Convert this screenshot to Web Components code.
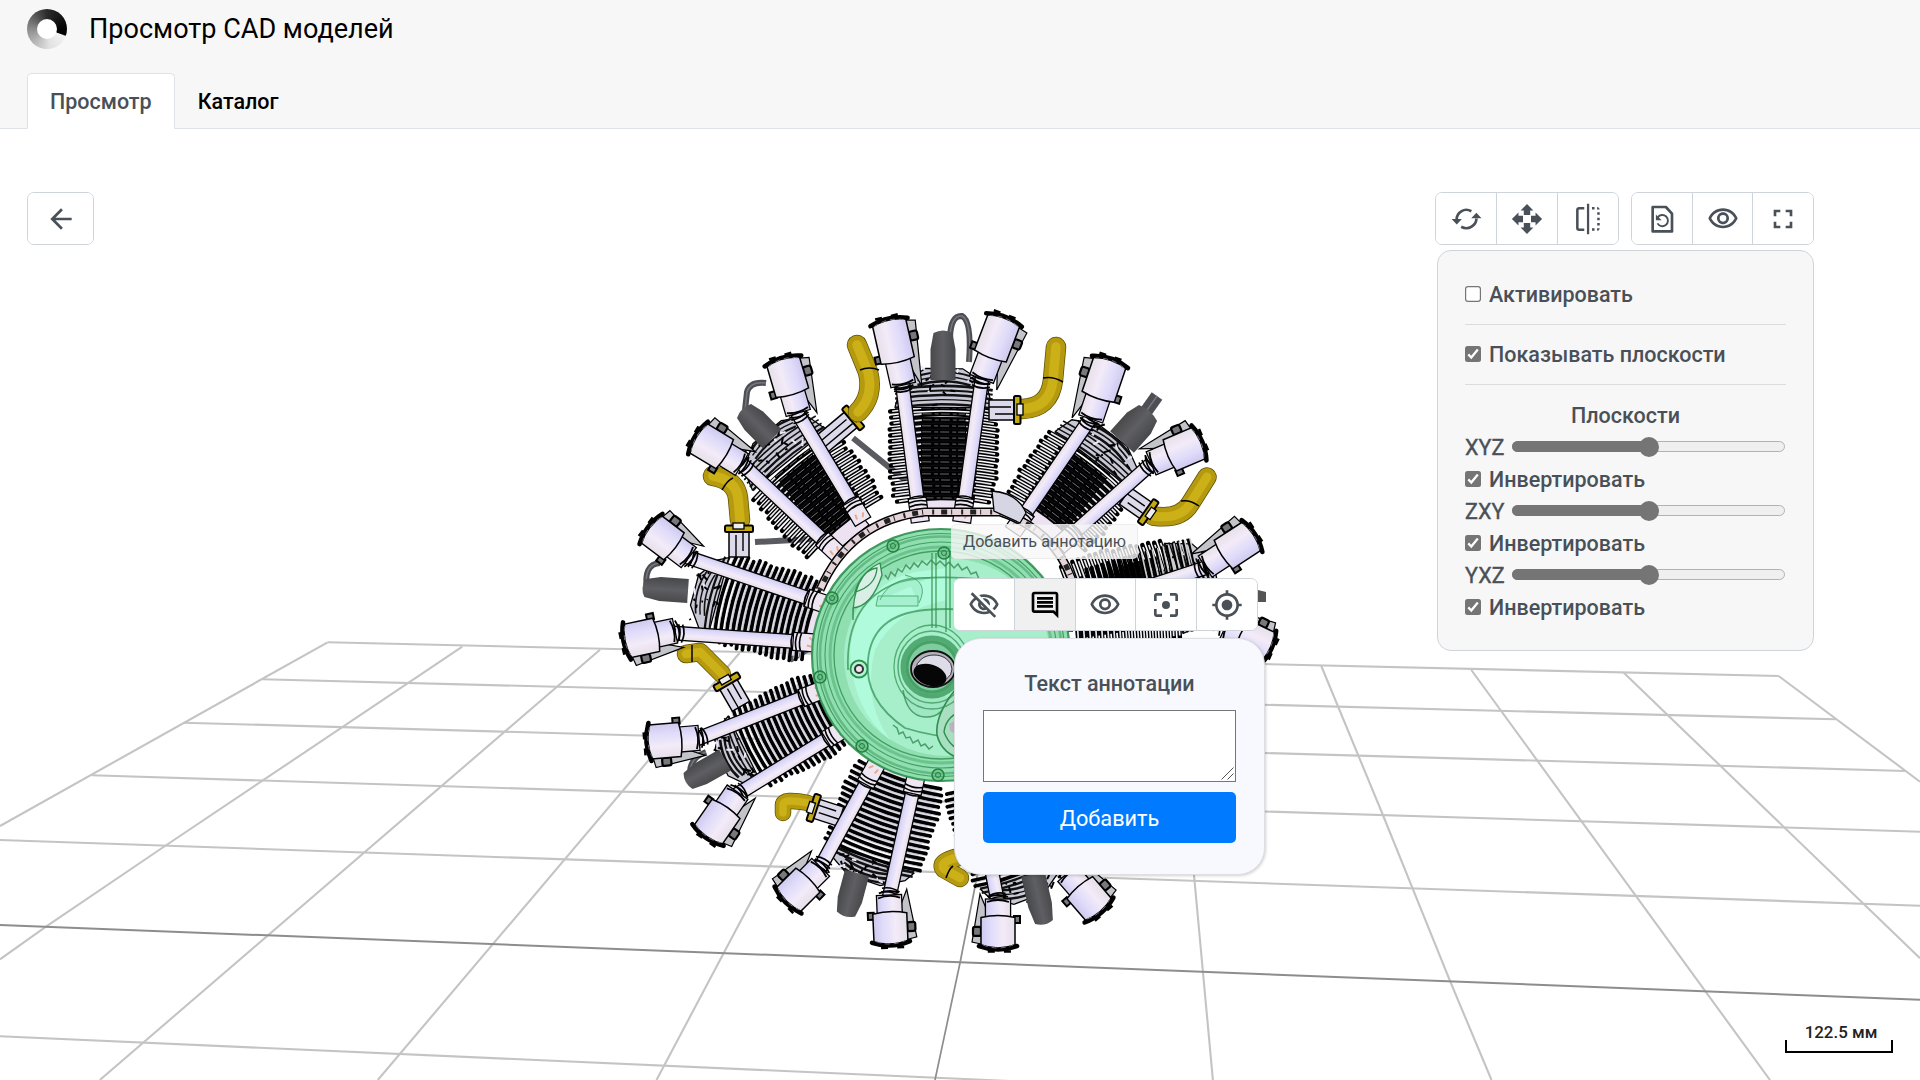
<!DOCTYPE html>
<html lang="ru">
<head>
<meta charset="utf-8">
<title>Просмотр CAD моделей</title>
<style>
  html, body { margin: 0; height: 100%; overflow: hidden; background: #fff; }
  body { font-family: Roboto, "Liberation Sans", sans-serif; font-size: 21.5px; line-height: 32px; color: #495057; }
</style>
</head>
<body>
<cad-app></cad-app>
<script>
const define = (name, html) => customElements.define(name, class extends HTMLElement {
  connectedCallback() {
    if (this.shadowRoot) return;
    const root = this.attachShadow({ mode: 'open' });
    root.innerHTML = typeof html === 'function' ? html(this) : html;
  }
});

/* ---------- icons, on a 24-unit grid ---------- */
const EYE = '<path d="M12 6c3.79 0 7.17 2.13 8.82 5.5C19.17 14.87 15.79 17 12 17s-7.17-2.13-8.82-5.5C4.83 8.13 8.21 6 12 6m0-2C7 4 2.73 7.11 1 11.5 2.73 15.89 7 19 12 19s9.27-3.11 11-7.5C21.27 7.11 17 4 12 4zm0 5a2.5 2.5 0 0 1 0 5 2.5 2.5 0 0 1 0-5m0-2c-2.48 0-4.5 2.02-4.5 4.5S9.52 16 12 16s4.5-2.02 4.5-4.5S14.48 7 12 7z"/>';
const ICONS = {
  back: '<path d="M20 11H7.83l5.59-5.59L12 4l-8 8 8 8 1.41-1.41L7.83 13H20v-2z"/>',
  eye: EYE,
  eyeOff: '<path d="M12 6c3.79 0 7.17 2.13 8.82 5.5-.59 1.22-1.42 2.27-2.41 3.12l1.41 1.41c1.39-1.23 2.49-2.77 3.18-4.53C21.27 7.11 17 4 12 4c-1.27 0-2.49.2-3.64.57l1.65 1.65C10.66 6.09 11.32 6 12 6zm-1.07 1.14L13 9.21c.57.25 1.03.71 1.28 1.28l2.07 2.07c.08-.34.14-.7.14-1.07C16.5 9.01 14.48 7 12 7c-.37 0-.72.05-1.07.14zM2.01 3.87l2.68 2.68C3.06 7.83 1.77 9.53 1 11.5 2.73 15.89 7 19 12 19c1.52 0 2.98-.29 4.32-.82l3.42 3.42 1.41-1.41L3.42 2.45 2.01 3.87zm7.5 7.5l2.61 2.61c-.04.01-.08.02-.12.02-1.38 0-2.5-1.12-2.5-2.5 0-.05.01-.08.01-.13zm-3.4-3.4l1.75 1.75c-.23.55-.36 1.15-.36 1.78 0 2.48 2.02 4.5 4.5 4.5.63 0 1.23-.13 1.77-.36l.98.98c-.88.24-1.8.38-2.75.38-3.79 0-7.17-2.13-8.82-5.5.7-1.43 1.72-2.61 2.93-3.53z"/>',
  full: '<path d="M7 14H5v5h5v-2H7v-3zm-2-4h2V7h3V5H5v5zm12 7h-3v2h5v-5h-2v3zM14 5v2h3v3h2V5h-5z"/>',
  focus: '<path d="M5 15H3v4c0 1.1.9 2 2 2h4v-2H5v-4zM5 5h4V3H5c-1.1 0-2 .9-2 2v4h2V5zm14-2h-4v2h4v4h2V5c0-1.1-.9-2-2-2zm0 16h-4v2h4c1.1 0 2-.9 2-2v-4h-2v4z"/><circle cx="12" cy="12" r="3"/>',
  locate: '<path d="M12 8c-2.21 0-4 1.79-4 4s1.79 4 4 4 4-1.79 4-4-1.79-4-4-4zm8.94 3c-.46-4.17-3.77-7.48-7.94-7.94V1h-2v2.06C6.83 3.52 3.52 6.83 3.06 11H1v2h2.06c.46 4.17 3.77 7.48 7.94 7.94V23h2v-2.06c4.17-.46 7.48-3.77 7.94-7.94H23v-2h-2.06zM12 19c-3.87 0-7-3.13-7-7s3.13-7 7-7 7 3.13 7 7-3.13 7-7 7z"/>',
  comment: '<path d="M20 2H4c-1.1 0-2 .9-2 2v12c0 1.1.9 2 2 2h14l4 4V4c0-1.1-.9-2-2-2zm0 15.17L18.83 16H4V4h16v13.17zM6 12h12v2H6zm0-3h12v2H6zm0-3h12v2H6z"/>',
  rotate: '<path fill="none" stroke="currentColor" stroke-width="2" d="M5 12.2C5 7.4 10.6 3 16 6.2M19.8 11.6C19.8 16.4 14 21 8.400 17.800"/><path d="M1.200 12h7.700l-3.800 4.200zM15.900 11.500h7.700l-3.800-4.200z"/>',
  move: '<path d="M12 .7l4.800 4.900h-2.400V9H9.600V5.600H7.200zM12 23.300l4.800-4.900h-2.400V15H9.600v3.400H7.200zM.7 12l4.900-4.800v2.400H9v4.800H5.600v2.400zM23.300 12l-4.900-4.800v2.400H15v4.800h3.400v2.400z"/>',
  flip: '<path fill="none" stroke="currentColor" stroke-width="1.900" d="M9.200 3.900H5.300a1.300 1.300 0 0 0-1.300 1.300v13.600a1.300 1.300 0 0 0 1.300 1.300h3.900"/><path d="M11.200.5h1.700v23h-1.700zM15 3h1.900v1.900H15zM18.800 3a2 2 0 0 1 2 1.900h-2zM18.900 7h1.900v1.900h-1.900zM18.900 11h1.900v1.900h-1.900zM18.900 15h1.900v1.900h-1.900zM15 19h1.900v1.900H15zM18.800 19h2a2 2 0 0 1-2 1.900z"/>',
  restore: '<path fill="none" stroke="currentColor" stroke-width="2" stroke-linejoin="round" d="M5 3h9.900l4.600 5v13.300H5z"/><path fill="none" stroke="currentColor" stroke-width="1.400" d="M8.800 10.800a4.200 4.200 0 1 1-.2 4.500"/><path d="M7.400 8.600v4.300h4.300z"/>'
};

define('tool-button', el => `
<style>
  :host { display: flex; align-items: center; justify-content: center; box-sizing: border-box; flex: 1 1 0;
    border-left: 1px solid #ced4da; background: #fff; color: #495057; }
  :host(:first-child) { border-left: 0; }
  :host([active]) { background: #f0f0f0; color: #000; }
  svg { display: block; width: 32px; height: 32px; fill: currentColor; margin-top: 1px; }
</style><svg viewBox="0 0 24 24">${ICONS[el.getAttribute('icon')]}</svg>`);

define('tool-group', `
<style>
  :host { display: flex; box-sizing: border-box; height: 53px; border: 1px solid #ced4da; border-radius: 7px; overflow: hidden; background: #fff; flex: none; }
</style><slot></slot>`);

define('check-row', `
<style>
  :host { display: flex; height: 32px; gap: 8px; align-items: flex-start; }
  svg { width: 16px; height: 16px; margin-top: 7px; flex: none; }
  .on { display: none; } :host([checked]) .on { display: block; } :host([checked]) .off { display: none; }
  span { font-weight: 500; }
</style>
<svg class="off" viewBox="0 0 16 16"><rect x=".6" y=".6" width="14.800" height="14.800" rx="2.400" fill="#fff" stroke="#767676" stroke-width="1.200"/></svg>
<svg class="on" viewBox="0 0 16 16"><rect width="16" height="16" rx="2.500" fill="#757575"/><path d="M3.300 8.400l3 3.100 6.500-8" fill="none" stroke="#fff" stroke-width="2.300"/></svg>
<span><slot></slot></span>`);

define('slider-row', `
<style>
  :host { display: flex; height: 32px; }
  b { font-weight: 400; -webkit-text-stroke: .4px; width: 47px; flex: none; letter-spacing: .1px; }
  .track { flex: 1; box-sizing: border-box; height: 11px; margin: 9px 1px 0 0; border: 1px solid #b2b2b2; border-radius: 6px; background: #efefef; display: flex; align-items: center; }
  .fill { width: 50%; height: 11px; margin-left: -1px; border-radius: 6px 0 0 6px; background: #757575; flex: none; }
  .thumb { width: 20px; height: 20px; margin-left: -9px; border-radius: 50%; background: #757575; flex: none; }
</style><b><slot></slot></b><div class="track"><div class="fill"></div><div class="thumb"></div></div>`);

define('planes-panel', `
<style>
  :host { display: block; box-sizing: border-box; width: 377px; height: 401px; padding: 28px 27px 26px; border: 1px solid #ced4da; border-radius: 14px; background: #f7f7f7; }
  hr { border: 0; border-top: 1px solid #dcdcdd; margin: 13px 0 14px; }
  .t { text-align: center; font-weight: 500; margin-top: 15px; height: 32px; }
</style>
<check-row>Активировать</check-row><hr>
<check-row checked>Показывать плоскости</check-row><hr>
<div class="t">Плоскости</div>
<slider-row>XYZ</slider-row><check-row checked>Инвертировать</check-row>
<slider-row>ZXY</slider-row><check-row checked>Инвертировать</check-row>
<slider-row>YXZ</slider-row><check-row checked>Инвертировать</check-row>`);

define('app-header', `
<style>
  :host { display: flex; flex-direction: column; justify-content: space-between; box-sizing: border-box; height: 129px; background: #f7f7f7; border-bottom: 1px solid #dee2e6; padding-left: 27px; flex: none; }
  .brand { display: flex; align-items: center; gap: 22px; height: 58px; }
  .logo { width: 40px; height: 40px; border-radius: 50%; display: grid; place-items: center; background: conic-gradient(#2b2b2b 0deg, #050505 85deg, #000 108deg, #f2f2f2 112deg, #e2e2e2 170deg, #c6c6c6 205deg, #8c8c8c 270deg, #4a4a4a 330deg, #2b2b2b 360deg); }
  .logo i { width: 20px; height: 20px; border-radius: 50%; background: #fff; }
  h1 { margin: 0; font-size: 27.050px; line-height: 40px; font-weight: 400; color: #000; }
  nav { display: flex; height: 56px; margin-bottom: -1px; }
  nav span { box-sizing: border-box; padding: 12px 22px 0; font-weight: 500; color: #000; border: 1px solid transparent; }
  nav .on { background: #fff; color: #495057; border-color: #dee2e6 #dee2e6 #fff; border-radius: 5px 5px 0 0; }
</style>
<div class="brand"><div class="logo"><i></i></div><h1>Просмотр CAD моделей</h1></div>
<nav><span class="on">Просмотр</span><span>Каталог</span></nav>`);

define('annotation-form', `
<style>
  :host { display: flex; flex-direction: column; box-sizing: border-box; width: 311px; height: 237px; padding: 28px 28px 0; border: 1.5px solid #dedfe2; border-radius: 27px; background: #f8f8ff; box-shadow: 1px 1px 3px rgba(0,0,0,.18); }
  .t { text-align: center; font-weight: 500; padding-top: 1px; margin-bottom: 10px; }
  textarea { display: block; box-sizing: border-box; width: 100%; height: 72px; margin: 0; border: 1px solid #767676; border-radius: 0; background: #fff; resize: none; }
  .area { position: relative; margin-bottom: 10px; }
  .area svg { position: absolute; right: 2px; bottom: 2px; width: 13px; height: 13px; }
  button { height: 51px; border: 0; border-radius: 5px; background: #007bff; color: #fff; font: 400 21.700px Roboto, sans-serif; padding: 2px 0 0; }
</style>
<div class="t">Текст аннотации</div>
<div class="area"><textarea></textarea><svg viewBox="0 0 13 13"><path d="M.5 12.500l12-12M6.500 12.500l6-6" stroke="#555" stroke-width="1"/></svg></div>
<button>Добавить</button>`);

define('scale-bar', `
<style>
  :host { display: block; width: 108px; font: 500 16.900px/20px Roboto, sans-serif; color: #222; text-align: center; padding-top: 1px; }
  span { display: block; padding-left: 4px; margin-bottom: -2px; }
  i { display: block; box-sizing: border-box; height: 13px; border: 2px solid #000; border-top: 0; }
</style><span>122.5 мм</span><i></i>`);

/* ---------- 3D scene: floor grid and radial engine ---------- */
function floor() {
  const L = [
    [[327.6,642.3],[1778.6,676]], [[262,679.3],[1835.6,719.3]], [[183.7,722.7],[1906,771]], [[91.8,775.3],[1920,831.7]],
    [[0,840],[1920,905.7]], [[0,1036.3],[1010,1081]],
    [[327.6,642.3],[0,826]], [[462.3,646.700],[165,846],[46,926.700],[0,959.300]], [[600,649.700],[99.8,1080]],
    [[739.700,652.700],[377.8,1080]], [[881,656],[656.5,1080]],
    [[1185,663],[1194,875],[1212.900,1080]], [[1321.300,666],[1382.500,814],[1449.900,980.700],[1491.500,1080]],
    [[1471.300,670],[1770,1080]], [[1623.800,672.700],[1920,958.300]], [[1778.600,676],[1920,781.700]]];
  const P = l => l.map(p => p.join(' ')).join('L');
  return L.map(l => `<path d="M${P(l)}" fill="none" stroke="#c4c4c4" stroke-width="2.100"/>`).join('')
    + `<path d="M0 925L960 962.300L1920 999.700" fill="none" stroke="#8d8d8d" stroke-width="2"/><path d="M1020 658L960 963L935 1080" fill="none" stroke="#8d8d8d" stroke-width="1.700"/>`;
}
/* deterministic jitter, so that the mechanical detail looks irregular */
let seed = 7; const rnd = () => (seed = (seed * 16807) % 2147483647) / 2147483647;
const frame = (a, b) => { const dx = b[0]-a[0], dy = b[1]-a[1]; return { len: Math.hypot(dx,dy), ang: Math.atan2(dy,dx)*180/Math.PI }; };
const place = (a, b, f) => { const k = frame(a,b); return `<g transform="translate(${a[0]} ${a[1]}) rotate(${k.ang.toFixed(2)})">${f(k.len)}</g>`; };

/* lit barrels show pale gaps across the whole width, the others keep a dark core */
const barrel = (base, top, hw, lit) => place(base, top, n => {
  let s = `<path d="M-14 ${-hw*.4}H8V${hw*.4}H-14Z" fill="#ece2f2" stroke="#000" stroke-width="1.200"/>`;
  s += lit ? `<path d="M4 ${-hw*.85}L${n*.74} ${-hw*.9}V${hw*.9}L4 ${hw*.85}Z" fill="#dddce6"/>`
           : `<path d="M4 ${-hw*.6}L${n*.72} ${-hw*.7}V${hw*.7}L4 ${hw*.6}Z" fill="#0b0b0d"/>`;
  const end = lit ? .9 : .8;
  for (let x = 4; x < n*end; x += 6) {
    const w = hw * (.88 + .12*Math.min(1, x/30)) + rnd()*3 - 1.5, b = 4;
    const d = `M${x-b} ${-w}Q${x+b} 0 ${x-b} ${w}`;
    s += `<path d="${d}" stroke="#000" stroke-width="${lit?3.800:4.400}" fill="none" stroke-linecap="round"/>`;
    s += lit ? `<path d="M${x+2.200-b} ${-w}Q${x+2.200+b} 0 ${x+2.200-b} ${w}" stroke="#c4c3d0" stroke-width=".8" fill="none"/>`
      : `<path d="M${x-b+.3} ${-w+2}Q${x-1} ${-w*.6} ${x-.3} ${-w*.42}M${x-.3} ${w*.42}Q${x-1} ${w*.6} ${x-b+.3} ${w-2}" stroke="#e6e5f0" stroke-width="1.700" fill="none"/><path d="M${x} ${-w*.4}V${w*.4}" stroke="#74747e" stroke-width=".9" stroke-dasharray="9 3 4 2" fill="none"/>`;
  }
  s += `<path d="M${n*end} ${-hw*.92}L${n} ${-hw*.8}L${n*1.13} ${-hw*.35}V${hw*.35}L${n} ${hw*.8}L${n*end} ${hw*.92}Z" fill="#c9c8d6" stroke="#000" stroke-width="1.300"/>`;
  for (let x = n*(end+.02); x < n*1.12; x += 4.600) {
    const w = hw * (x < n ? .92 : .5);
    s += `<path d="M${x-3} ${-w}Q${x+5} 0 ${x-3} ${w}" stroke="#111" stroke-width="${(1.300+rnd()*1.600).toFixed(1)}" fill="none"/>`;
  }
  for (let i = 0; i < 22; i++) { const x = n*(end+rnd()*(1.12-end)), y = (rnd()-.5)*hw*1.300; s += `<path d="M${x} ${y}l${rnd()*9-2} ${rnd()*12-6}" stroke="${i%4?'#000':'#efe9f5'}" stroke-width="2"/>`; }
  return s;
});
const rod = (a, b) => place(a, b, n => `
  <rect x="0" y="-6.800" width="${n}" height="13.600" fill="url(#tube)" stroke="#000" stroke-width="1.300"/>
  ${[-1,4,8].map(x => `<path d="M${x} -9Q${x+4} 0 ${x} 9" fill="none" stroke="#000" stroke-width="1.700"/>`).join('')}
  <rect x="${n-22}" y="-9" width="24" height="18" fill="#efe6f4" stroke="#000" stroke-width="1.200"/>
  <path d="M${n-18} -9q-3 9 0 18M${n-14} -9q-3 9 0 18M${n-22} -9.500q-4 9 0 19" fill="none" stroke="#000" stroke-width="1.600"/>
  <path d="M${n-6} -5l4 3M${n-8} 3l5 1" stroke="#e9a98c" stroke-width="2"/>`);
/* rocker box: cap centre, throat centre, side on which the lug sits */
const box = (c, e, side, hw = 17) => place(c, e, n => {
  const m = n * .62, s = side;
  return `<path d="M2 ${s*hw}L4 ${s*(hw+9)}L${n+6} ${s*(hw+1)}L${m} ${s*8}Z" fill="#c3c3ca" stroke="#000" stroke-width="1.200"/>
  <rect x="${n*.22}" y="${s>0?hw:-hw-8}" width="9" height="8" rx="2" fill="#77777c" stroke="#000" stroke-width="2.200"/>
  <rect x="${n*.5}" y="${s>0?-hw-5:hw-1}" width="7" height="6" fill="#77777c" stroke="#000" stroke-width="2"/>
  <rect x="${m-3}" y="${-hw*.74}" width="${n-m+4}" height="${hw*1.480}" fill="url(#tube)" stroke="#000" stroke-width="1.300"/>
  <path d="M0 ${-hw}H${m}Q${m+4} 0 ${m} ${hw}H0Q-6 0 0 ${-hw}Z" fill="url(#tube)" stroke="#000" stroke-width="1.500"/>
  <path d="M0 ${-hw-2}Q-7 0 0 ${hw+2}" fill="none" stroke="#000" stroke-width="4.600" stroke-linecap="round"/>
  <path d="M1 ${-hw+2}Q-5 0 1 ${hw-2}" fill="none" stroke="#777" stroke-width=".9" stroke-dasharray="5 4"/>
  <path d="M-5.500 ${-hw*.6}v7M-5.500 ${hw*.35}v7" stroke="#000" stroke-width="2.600"/>
  <path d="M${n-2} -11q4 11 0 22M${n+3} -10q4 10 0 20" fill="none" stroke="#000" stroke-width="1.800"/>`;
});
const plug = (a, b, w) => place(a, b, n => `<path d="M0 ${-w*.38}Q-5 0 0 ${w*.38}L${n*.35} ${w*.5}H${n}V${-w*.5}H${n*.35}Z" fill="url(#rubber)"/>`);
const wire = (d, w = 6) => `<path d="${d}" fill="none" stroke="#4e4f54" stroke-width="${w}"/><path d="${d}" fill="none" stroke="#77787d" stroke-width="1.500"/>`;
const pipe = (d, w = 19) => `<path d="${d}" fill="none" stroke="#5f5200" stroke-width="${w+1.500}" stroke-linecap="round" stroke-linejoin="round"/><path d="${d}" fill="none" stroke="#b59a10" stroke-width="${w}" stroke-linecap="round" stroke-linejoin="round"/><path d="${d}" fill="none" stroke="#cbb018" stroke-width="${w*.5}" stroke-linecap="round" stroke-linejoin="round"/>`;
const flange = (x, y, a, l = 26) => `<g transform="translate(${x} ${y}) rotate(${a})"><rect x="-10" y="2" width="20" height="${l}" fill="#dcdaea" stroke="#000" stroke-width="1.500"/><path d="M-3 6v${l-4}M4 4v${l-8}" stroke="#000" stroke-width="1.400"/><rect x="-14" y="-3.500" width="28" height="6.500" rx="1.500" fill="#c4a90f" stroke="#000" stroke-width="2"/><rect x="-6" y="-6" width="11" height="6" fill="#eee" stroke="#000" stroke-width="1.300"/></g>`;
const seam = (x1,y1,x2,y2) => `<path d="M${x1} ${y1}Q${(x1+x2)/2} ${(y1+y2)/2-4} ${x2} ${y2}" fill="none" stroke="#000" stroke-width="1.500"/>`;

function engine() {
  let s = '';
  s += `<path d="M853 438L906 481M755 542L812 539M790 660L815 645" stroke="#5a5b60" stroke-width="6"/>`;
  s += wire('M950 337Q951 315 962 316Q972 321 969 362') + wire('M766 383Q750 381 747 392L745 410') + wire('M660 563Q643 564 647 590') + wire('M690 775Q689 758 706 752');
  const cyl = [
    [[943,502],[944,384],53], [[844,527],[776,443],52], [[812,622],[708,594],44,1], [[838,705],[735,756],42,1],
    [[900,775],[868,868],49,1], [[985,780],[1024,885],46,1], [[1047,521],[1105,445],52], [[1070,610],[1200,583],50]];
  s += cyl.map(c => barrel(...c)).join('');
  /* long cooling fins of the right-hand cylinder */
  s += place([1088,577],[1196,553], n => { let t=''; for (let x=0;x<n;x+=5.600) t += `<path d="M${x} ${-8-x*.06}V18" stroke="#000" stroke-width="${x<55?4:2.600}" stroke-linecap="round"/>` + (x<55?'':`<path d="M${x+1.500} ${-9-x*.06}V18" stroke="#ccc" stroke-width="1.600"/>`); return t; });
  s += plug([943,333],[943,380],25) + plug([744,411],[772,439],26) + plug([645,588],[688,591],24) + plug([688,781],[725,760],24)
     + plug([846,914],[857,873],25) + plug([1044,922],[1033,874],24) + wire('M1157 396L1140 420', 13) + plug([1148,413],[1122,442],32)
     + `<path d="M1258 590l8 2v10h-8z" fill="#555"/>`;
  s += flange(853,418,50,46) + pipe('M857 345L868 372Q874 396 858 412', 19) + seam(860,370,879,370)
     + pipe('M1056 347L1053 380Q1050 408 1022 409') + seam(1043,378,1063,382) + flange(1017,410,90)
     + pipe('M713 476Q736 480 738 498L740 520', 19) + seam(722,490,733,478) + flange(739,529,0)
     + pipe('M686 654L700 652L722 674', 17) + seam(692,662,692,645) + flange(727,682,-30)
     + pipe('M783 813L783 805Q783 798 808 803', 15) + flange(814,808,-72)
     + pipe('M959 857Q938 862 944 869L960 878', 17) + seam(946,878,953,866)
     + pipe('M1207 477L1190 504Q1180 520 1153 516', 18) + seam(1181,501,1199,506) + flange(1148,512,125);
  const rods = [
    [[902,382],[920,520]], [[982,378],[962,520]], [[797,412],[862,520]], [[742,464],[838,554]],
    [[687,557],[828,605]], [[674,633],[815,643]], [[697,739],[822,690]], [[736,795],[845,728]],
    [[820,868],[876,765]], [[889,898],[917,772]], [[1090,419],[1014,530]], [[1151,464],[1060,545]],
    [[1205,568],[1060,615]], [[1222,622],[1050,622]], [[998,903],[978,800]], [[1070,880],[1020,790]]];
  s += rods.map(r => rod(...r)).join('');
  const boxes = [
    [[889,322],[903,384],-1], [[1004,320],[982,378],-1], [[783,361],[798,412],-1], [[698,438],[741,464],-1],
    [[651,529],[688,557],-1], [[627,641],[674,631],1], [[650,742],[698,738],1], [[708,835],[737,793],1],
    [[788,900],[820,868],-1], [[891,942],[889,896],1], [[1110,362],[1091,418],1], [[1199,443],[1152,463],1],
    [[1252,536],[1206,566],1], [[1268,648],[1226,628],1], [[998,946],[998,900],-1], [[1099,910],[1068,874],1]];
  s += boxes.map(b => box(...b)).join('');
  /* crankcase rim behind the cover */
  const rim = 'M820 590Q850 520 925 512L1000 512Q1060 532 1075 590';
  s += `<path d="${rim}" fill="none" stroke="#000" stroke-width="9"/><path d="${rim}" fill="none" stroke="#e4d3d8" stroke-width="6"/><path d="${rim}" fill="none" stroke="#222" stroke-width="5" stroke-dasharray="2 7 6 4 1 9"/>
  <path d="M992 491q26 2 34 22l-6 10l-26 -12z" fill="#d5d5e4" stroke="#000" stroke-width="1.300"/>`;
  return s + cover();
}
function cover() {
  const g = '#2f8f4e';
  let s = `<ellipse cx="941" cy="655" rx="129" ry="126" fill="#8fdfb0"/>`;
  [[129,126,2.200,.9],[124,121.500,1.200,.8],[121,118.500,2.500,.45],[116,113,1.100,.8],[111,108,3,.35],[107,104,1.300,.8]].forEach(([a,b,w,o]) =>
    s += `<ellipse cx="941" cy="655" rx="${a}" ry="${b}" fill="none" stroke="${g}" stroke-width="${w}" opacity="${o}"/>`);
  s += `<ellipse cx="947" cy="657" rx="103" ry="99" fill="#a6efca"/>
  <path d="M850 650Q858 585 915 572L947 568V600Q895 610 875 650Q862 700 890 740Q852 710 850 650Z" fill="#b0fbdb"/>
  <path d="M848 670Q845 600 900 582Q930 574 990 580M868 660Q872 615 925 610Q970 606 1000 618M868 660Q864 700 905 728Q950 742 985 735" fill="none" stroke="${g}" stroke-width="1.800" opacity=".7"/>
  <path d="M853 620Q852 575 880 563L882 575Q872 606 853 608ZM855 592Q862 570 877 568Q876 586 855 592Z" fill="#d9efe6" stroke="${g}" stroke-width="1.300"/>
  <path d="M885 575l3 4 3-7 4 4 3-7 4 3 4-7 4 4 4-6 4 4 4-6 5 4 4-5 5 5 4-4 5 5 4-4 5 6 4-4 4 6 5-3 4 7 5-2 3 7" fill="none" stroke="#4a9f6a" stroke-width="1.500"/>
  <path d="M893 725l4 3 2 6 4-2 3 6 4-1 3 6 5-3 3 6 4-2 4 5 4-3" fill="none" stroke="#4a9f6a" stroke-width="1.500"/>
  <path d="M932 553V628M936 553V628M946 553V632M950 553V628" stroke="${g}" stroke-width="1.400" opacity=".8"/>
  <path d="M880 600Q890 575 930 578M905 575q25 6 14 28M878 596h40v10h-42z" fill="#86d6ab" fill-opacity=".35" stroke="${g}" stroke-width="1" opacity=".7"/>
  <path d="M903 690q4 26 22 27t24-20" fill="#9fe6c2" stroke="#4a9f6a" stroke-width="1.500"/>
  <path d="M955 690Q935 715 937 735Q942 755 965 760V700Z" fill="#a8dfc0" stroke="${g}" stroke-width="1.600"/><path d="M965 710Q946 715 944 732Q950 748 965 752" fill="none" stroke="${g}" stroke-width="1.400"/><path d="M949 724l7-4v14l-6-3z" fill="#b9b4bf"/>`;
  [[38,42,1.300],[34,36,1.500],[29,29,5],[25,25,3]].forEach(([a,b,w]) => s += `<ellipse cx="932" cy="667" rx="${a}" ry="${b}" fill="${w==5?'#6fc08c':'none'}" stroke="${g}" stroke-width="${w}" opacity=".7"/>`);
  s += `<ellipse cx="933" cy="669" rx="22" ry="18" fill="#b4b1bd" stroke="#111" stroke-width="1.800"/><ellipse cx="934" cy="669" rx="18" ry="14" fill="#dedce9" stroke="#333"/><ellipse cx="930" cy="675" rx="17" ry="10.500" fill="#060606" transform="rotate(18 930 675)"/>
  <circle cx="859" cy="669" r="8.500" fill="#b0f5d4" stroke="${g}" stroke-width="1.800"/><circle cx="859" cy="669" r="4" fill="#efe3ee" stroke="#333" stroke-width="2"/>`;
  [[832,598],[820,677],[862,746],[938,775],[893,546],[944,553]].forEach(([x,y]) => s += `<circle cx="${x}" cy="${y}" r="6" fill="#5cb17a" fill-opacity=".5" stroke="#23803f" stroke-width="1.500"/><circle cx="${x}" cy="${y}" r="2.500" fill="none" stroke="#23803f"/>`);
  return s;
}

define('cad-scene', () => `
<style>:host { display: block; } svg { display: block; width: 100%; height: 100%; }</style>
<svg viewBox="0 129 1920 951"><defs>
  <linearGradient id="tube" x1="0" y1="0" x2="0" y2="1"><stop offset="0" stop-color="#cfcaee"/><stop offset=".3" stop-color="#e0dcfa"/><stop offset=".65" stop-color="#f3ebf8"/><stop offset="1" stop-color="#e6e0ea"/></linearGradient>
  <linearGradient id="rubber" x1="0" y1="0" x2="0" y2="1"><stop offset="0" stop-color="#47484c"/><stop offset=".5" stop-color="#5f5f63"/><stop offset="1" stop-color="#49484b"/></linearGradient>
</defs>${floor()}${engine()}</svg>`);

define('cad-app', `
<style>
  :host { display: flex; flex-direction: column; height: 1080px; width: 1920px; overflow: hidden; }
  main { position: relative; flex: 1; }
  cad-scene { position: absolute; inset: 0; }
  .over { position: relative; display: flex; justify-content: space-between; align-items: flex-start; padding: 63px 106px 0 27px; }
  .back { width: 67px; }
  .right { display: flex; flex-direction: column; align-items: flex-end; gap: 5px; }
  .bars { display: flex; gap: 12px; }
  .bars tool-group { width: 184px; }
  .bars tool-group:last-child { width: 183px; }
  .menu { position: absolute; left: 951px; top: 395px; display: flex; flex-direction: column; align-items: flex-start; }
  .tip { box-sizing: border-box; width: 187px; height: 35px; padding-left: 11px; font-size: 16.150px; line-height: 34px; background: rgba(247,247,247,.8); border: 1px solid rgba(225,225,225,.5); border-radius: 5px; margin-bottom: 19px; white-space: nowrap; }
  .menu tool-group { width: 305px; margin: 0 0 7px 2px; }
  annotation-form { margin-left: 3px; }
  scale-bar { position: absolute; left: 1785px; top: 892px; }
</style>
<app-header></app-header>
<main>
  <cad-scene></cad-scene>
  <div class="over">
    <tool-group class="back"><tool-button icon="back"></tool-button></tool-group>
    <div class="right">
      <div class="bars">
        <tool-group><tool-button icon="rotate"></tool-button><tool-button icon="move"></tool-button><tool-button icon="flip"></tool-button></tool-group>
        <tool-group><tool-button icon="restore"></tool-button><tool-button icon="eye"></tool-button><tool-button icon="full"></tool-button></tool-group>
      </div>
      <planes-panel></planes-panel>
    </div>
  </div>
  <div class="menu">
    <div class="tip">Добавить аннотацию</div>
    <tool-group><tool-button icon="eyeOff"></tool-button><tool-button icon="comment" active></tool-button><tool-button icon="eye"></tool-button><tool-button icon="focus"></tool-button><tool-button icon="locate"></tool-button></tool-group>
    <annotation-form></annotation-form>
  </div>
  <scale-bar></scale-bar>
</main>`);
</script>
</body>
</html>
